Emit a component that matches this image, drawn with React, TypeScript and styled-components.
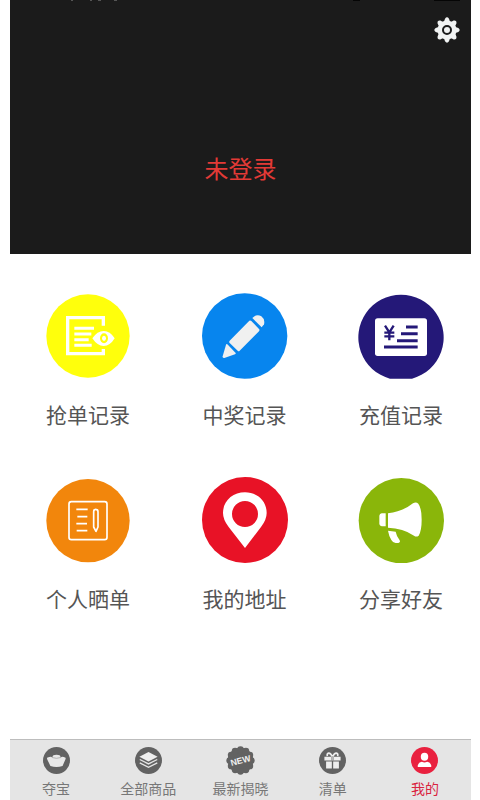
import React from "react";
import styled, { createGlobalStyle } from "styled-components";

const GlobalStyle = createGlobalStyle`
  * { box-sizing: border-box; }
  body {
    margin: 0;
    background: #ffffff;
    font-family: "Noto Sans CJK SC", sans-serif;
  }
  button { font: inherit; border: 0; padding: 0; background: none; cursor: pointer; }
`;

const Page = styled.div`
  min-height: 100vh;
  padding: 0 9px 0 10px;
  display: flex;
  flex-direction: column;
`;

const Hero = styled.header`
  height: 254px;
  background: #1b1b1b;
  display: flex;
  flex-direction: column;
  align-items: center;
`;

const StatusEdge = styled.svg`
  display: block;
  width: 100%;
  height: 1px;
`;

const SettingsButton = styled.button`
  align-self: flex-end;
  width: 26px;
  height: 26px;
  margin: 16px 11px 0 0;
  svg { display: block; }
`;

const LoginButton = styled.button`
  margin-top: 107px;
  font-size: 24px;
  line-height: 36px;
  color: #e33a36;
`;

const Menu = styled.main`
  flex: 1;
  display: grid;
  grid-template-columns: repeat(3, 86px);
  justify-content: space-between;
  align-content: start;
  row-gap: 48px;
  padding: 39px 27px 39px 35px;
`;

const MenuItem = styled.button`
  display: flex;
  flex-direction: column;
  align-items: center;
  gap: 20px;
  svg { display: block; }
`;

const MenuLabel = styled.span`
  font-size: 21px;
  line-height: 30px;
  white-space: nowrap;
  color: #555555;
`;

const TabBar = styled.nav`
  display: grid;
  grid-template-columns: repeat(5, 1fr);
  border-top: 1px solid #bdbdbd;
  background: #e5e5e5;
`;

const Tab = styled.a<{ $active?: boolean }>`
  display: flex;
  flex-direction: column;
  align-items: center;
  gap: 3px;
  padding: 6px 0 2px;
  font-size: 14px;
  line-height: 20px;
  text-decoration: none;
  color: ${(p) => (p.$active ? "#d9233f" : "#777777")};
  svg { display: block; }
`;

const Disc = ({ view, children }: { view: string; children: React.ReactNode }) => (
  <svg width="86" height="86" viewBox={view} aria-hidden="true">
    {children}
  </svg>
);

const OrdersIcon = () => (
  <Disc view="27 27 258 258">
    <circle cx="156" cy="156" r="125" fill="#ffff0c" />
    <path d="M202 125V101H95V209H202V195" fill="none" stroke="#fff" strokeWidth="10" />
    <path d="M115 133H174M115 150H166M115 167H158M115 184H167" stroke="#fff" strokeWidth="9" />
    <path d="M169 163Q184 141 203 141Q222 141 236 163Q222 186 203 186Q184 186 169 163Z" fill="#fff" />
    <ellipse cx="204" cy="163" rx="12" ry="15" fill="#ffff0c" />
    <ellipse cx="204" cy="163" rx="6" ry="8" fill="#fff" />
  </Disc>
);

const PencilIcon = () => (
  <Disc view="35 27 258 258">
    <circle cx="163" cy="156" r="128" fill="#0785ee" />
    <g fill="#f0f0f0">
      <path d="M186 102Q199 88 213 97Q225 106 221 121L214 130Z" />
      <path d="M177 110Q180 108 183 111L206 135Q209 138 206 142L148 200Q145 203 142 200L118 177Q115 174 118 170Z" />
      <path d="M111 181L136 207Q137 209 134 211L102 222Q96 223 97 217L107 182Q108 179 111 181Z" />
    </g>
  </Disc>
);

const RechargeIcon = () => (
  <Disc view="36 27 258 258">
    <path d="M132 284A128 128 0 1 1 198 284Z" fill="#241878" />
    <rect x="87" y="103" width="156" height="113" rx="8" fill="#fff" />
    <path d="M117 125L130 145L143 125M130 144V169M115 146H145M115 157H145" fill="none" stroke="#241878" strokeWidth="7" />
    <path d="M180 129H215M165 149H215M153 170H215M114 189H215" stroke="#241878" strokeWidth="9" />
  </Disc>
);

const ReviewIcon = () => (
  <Disc view="27 27 258 258">
    <circle cx="156" cy="158" r="125" fill="#f2860c" />
    <rect x="99" y="101" width="114" height="114" rx="7" fill="none" stroke="#fff" strokeWidth="5" />
    <path d="M121 124H155M124 146H154M121 167H153M122 188H154" stroke="#fff" strokeWidth="5" />
    <path d="M173 131Q173 124 179 124Q186 124 186 131V177L180 190L173 177Z" fill="none" stroke="#fff" strokeWidth="5" strokeLinejoin="round" />
  </Disc>
);

const AddressIcon = () => (
  <Disc view="36 28 258 258">
    <circle cx="165" cy="157" r="129" fill="#e81226" />
    <path fillRule="evenodd" fill="#fff" d="M165 241L116 178Q99 156 99 136C99 99 129 74 165 74C201 74 230 99 230 136Q230 156 213 178ZM165 100A39 39 0 1 0 165 178A39 39 0 1 0 165 100Z" />
  </Disc>
);

const ShareIcon = () => (
  <Disc view="36 27 258 258">
    <circle cx="166" cy="158" r="128" fill="#8ab60a" />
    <g fill="#fff">
      <path d="M107 136H119V175H107Q101 174 100 168V143Q101 137 107 136Z" />
      <path d="M126 136Q172 130 201 106Q210 101 217 107Q227 120 227 155Q227 188 218 203Q211 208 204 203Q171 180 126 179Z" />
      <path d="M126 188L149 191Q151 203 161 217Q164 223 157 225H149Q141 225 136 216Q129 205 126 188Z" />
    </g>
  </Disc>
);

const menu = [
  { label: "抢单记录", Icon: OrdersIcon },
  { label: "中奖记录", Icon: PencilIcon },
  { label: "充值记录", Icon: RechargeIcon },
  { label: "个人晒单", Icon: ReviewIcon },
  { label: "我的地址", Icon: AddressIcon },
  { label: "分享好友", Icon: ShareIcon },
];

const TabIcon = ({ children }: { children: React.ReactNode }) => (
  <svg width="29" height="29" viewBox="-43 -43 86 86" aria-hidden="true">
    {children}
  </svg>
);

const TreasureIcon = () => (
  <TabIcon>
    <circle r="40" fill="#626262" />
    <path d="M-28 -8Q-17 -13 -12 -10Q-12 -17 0 -17Q12 -17 12 -10Q18 -13 27 -8Q28 -5 25 0L18 16Q0 22 -18 16L-26 0Q-29 -5 -28 -8Z" fill="#e8e8e8" />
    <path d="M-14 -9Q0 -4 14 -9" fill="none" stroke="#9a9a9a" strokeWidth="2" />
  </TabIcon>
);

const GoodsIcon = () => (
  <TabIcon>
    <circle r="40" fill="#626262" />
    <path d="M0 -25L27 -11L0 3L-27 -11Z" fill="#eee" />
    <path d="M-26 -3L0 10L26 -3M-26 7L0 20L26 7" fill="none" stroke="#e5e5e5" strokeWidth="4" />
  </TabIcon>
);

const petals = Array.from({ length: 12 }, (_, i) => (i * Math.PI) / 6);

const NewIcon = () => (
  <TabIcon>
    <circle r="38" fill="#626262" />
    {petals.map((a) => (
      <circle key={a} cx={Math.cos(a) * 32} cy={Math.sin(a) * 32} r="10" fill="#626262" />
    ))}
    <text y="9" transform="rotate(-15)" textAnchor="middle" fill="#f0f0f0" fontFamily="Liberation Sans, sans-serif" fontSize="26" fontWeight="700">
      NEW
    </text>
  </TabIcon>
);

const GiftIcon = () => (
  <TabIcon>
    <circle r="40" fill="#626262" />
    <path d="M-24 -11H24V0H-24ZM-19 3H-2V24H-19ZM2 3H19V24H2Z" fill="#eee" />
    <path d="M-2 0V-11M2 0V-11" stroke="#626262" strokeWidth="2" />
    <path d="M-1 -12Q-5 -22 -11 -22Q-18 -20 -15 -13M1 -12Q5 -22 11 -22Q18 -20 15 -13" fill="none" stroke="#eee" strokeWidth="5" />
  </TabIcon>
);

const ProfileIcon = () => (
  <TabIcon>
    <circle r="40" fill="#e9213f" />
    <ellipse cy="-11" rx="11" ry="12" fill="#fff" />
    <path d="M-20 19V14Q-18 6 -8 4Q0 8 8 4Q18 6 20 14V19Z" fill="#fff" />
  </TabIcon>
);

const tabs = [
  { label: "夺宝", Icon: TreasureIcon },
  { label: "全部商品", Icon: GoodsIcon },
  { label: "最新揭晓", Icon: NewIcon },
  { label: "清单", Icon: GiftIcon },
  { label: "我的", Icon: ProfileIcon, active: true },
];

const teeth = [0, 45, 90, 135, 180, 225, 270, 315];

const GearIcon = () => (
  <svg width="26" height="26" viewBox="-39 -39 78 78" aria-hidden="true">
    <g fill="#f1f3f3">
      <circle r="28" />
      {teeth.map((t) => (
        <path key={t} transform={`rotate(${t})`} d="M-13 -22Q-7 -27 -6 -34Q0 -42 6 -34Q7 -27 13 -22Z" />
      ))}
    </g>
    <circle r="12" fill="none" stroke="#1b1b1b" strokeWidth="6" />
  </svg>
);

export default function App() {
  return (
    <>
      <GlobalStyle />
      <Page>
        <Hero>
          <StatusEdge viewBox="0 0 461 1" preserveAspectRatio="none" aria-hidden="true">
            <path d="M61 0.5H63M80 0.5H82M88 0.5H91M104 0.5H107" stroke="#555" />
            <path d="M343 0.5H350M424 0.5H450" stroke="#050505" />
          </StatusEdge>
          <SettingsButton type="button" aria-label="设置">
            <GearIcon />
          </SettingsButton>
          <LoginButton type="button">未登录</LoginButton>
        </Hero>
        <Menu>
          {menu.map(({ label, Icon }) => (
            <MenuItem type="button" key={label}>
              <Icon />
              <MenuLabel>{label}</MenuLabel>
            </MenuItem>
          ))}
        </Menu>
        <TabBar>
          {tabs.map(({ label, Icon, active }) => (
            <Tab href="#" key={label} $active={active} aria-current={active ? "page" : undefined}>
              <Icon />
              {label}
            </Tab>
          ))}
        </TabBar>
      </Page>
    </>
  );
}
